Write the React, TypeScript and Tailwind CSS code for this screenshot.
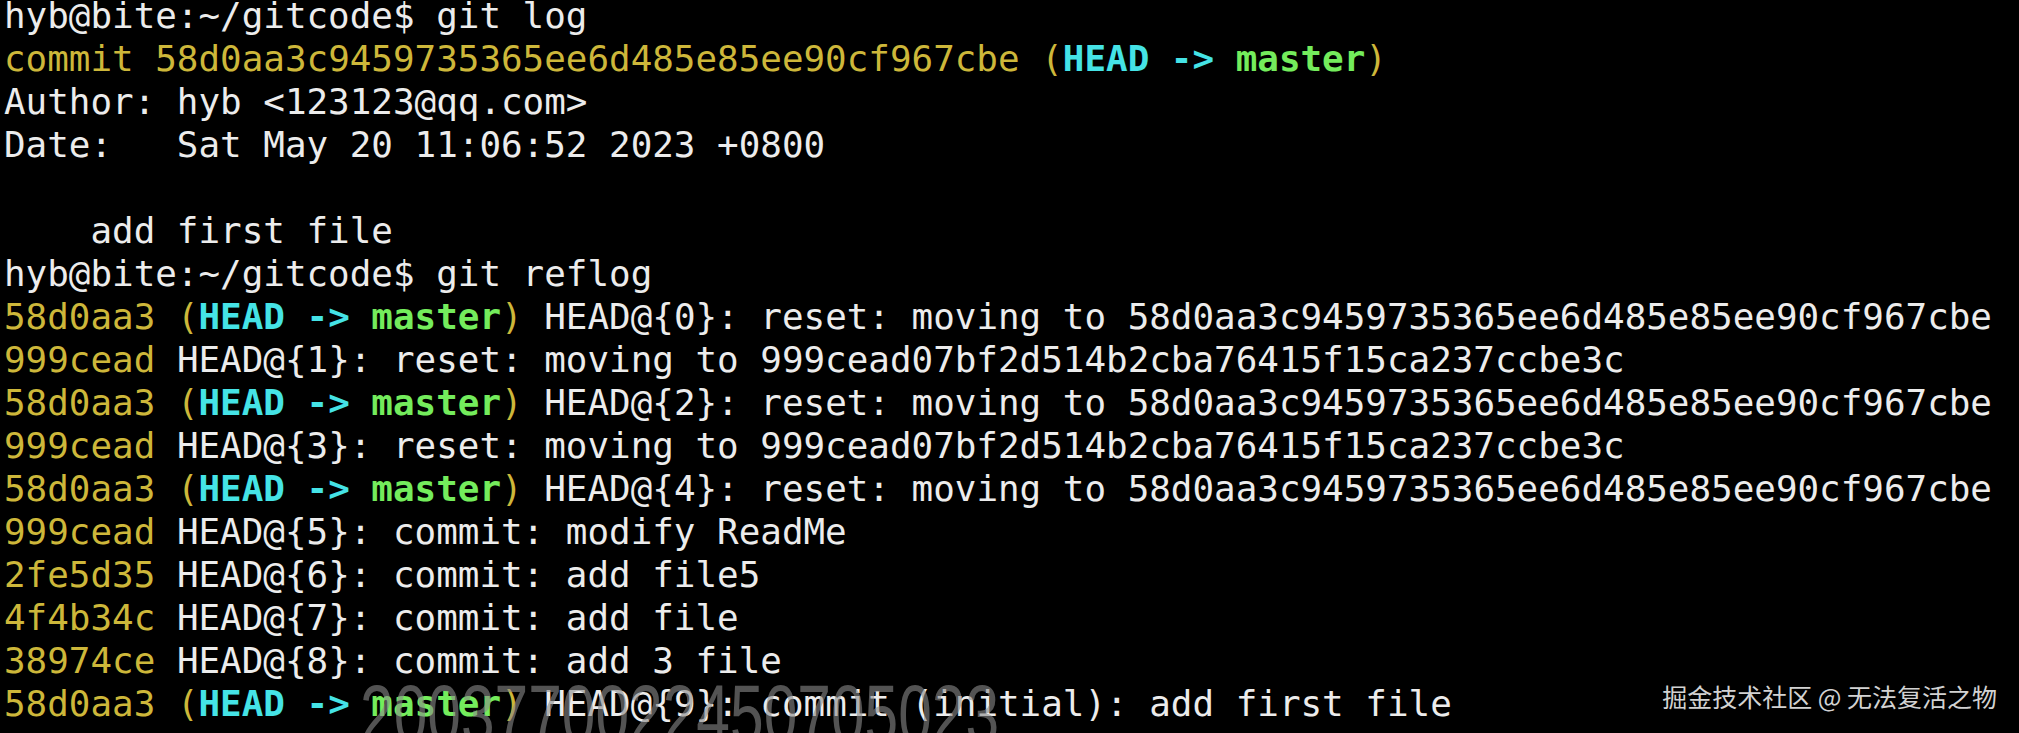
import React from "react";

const Y = ({ children }: { children: React.ReactNode }) => (
  <span className="text-[#cdb73a]">{children}</span>
);
const Head = () => (
  <>
    <Y>(</Y>
    <span className="font-bold text-[#45e3e6]">HEAD -&gt; </span>
    <span className="font-bold text-[#74ec5c]">master</span>
    <Y>)</Y>
  </>
);

const FULL = "58d0aa3c9459735365ee6d485e85ee90cf967cbe";
const OTHER = "999cead07bf2d514b2cba76415f15ca237ccbe3c";

export default function App() {
  const reflog: [string, boolean, string][] = [
    ["58d0aa3", true, `HEAD@{0}: reset: moving to ${FULL}`],
    ["999cead", false, `HEAD@{1}: reset: moving to ${OTHER}`],
    ["58d0aa3", true, `HEAD@{2}: reset: moving to ${FULL}`],
    ["999cead", false, `HEAD@{3}: reset: moving to ${OTHER}`],
    ["58d0aa3", true, `HEAD@{4}: reset: moving to ${FULL}`],
    ["999cead", false, "HEAD@{5}: commit: modify ReadMe"],
    ["2fe5d35", false, "HEAD@{6}: commit: add file5"],
    ["4f4b34c", false, "HEAD@{7}: commit: add file"],
    ["38974ce", false, "HEAD@{8}: commit: add 3 file"],
    ["58d0aa3", true, "HEAD@{9}: commit (initial): add first file"],
  ];
  return (
    <div className="relative w-[2019px] h-[733px] overflow-hidden bg-black">
      <div className="-mt-[6px] pl-[4px] whitespace-pre text-[#ececec] font-['DejaVu_Sans_Mono',monospace] text-[35.9px] leading-[43px]">
        <div>hyb@bite:~/gitcode$ git log</div>
        <div>
          <Y>commit {FULL} </Y>
          <Head />
        </div>
        <div>Author: hyb &lt;123123@qq.com&gt;</div>
        <div>Date:   Sat May 20 11:06:52 2023 +0800</div>
        <div>{" "}</div>
        <div>    add first file</div>
        <div>hyb@bite:~/gitcode$ git reflog</div>
        {reflog.map(([h, head, rest], i) => (
          <div key={i}>
            <Y>{h}</Y> {head ? (
              <>
                <Head />{" "}
              </>
            ) : null}
            {rest}
          </div>
        ))}
      </div>
      <div className="absolute left-[360px] top-[672px] origin-left scale-x-[0.72] whitespace-nowrap font-['Liberation_Sans',sans-serif] text-[84px] leading-none text-[#8a8a8a]/60">
        2003770022450705023
      </div>
      <div className="absolute right-[22px] top-[680px] whitespace-nowrap font-['Noto_Sans_CJK_SC',sans-serif] text-[25px] leading-[32px] text-[#d2d2d2]">
        掘金技术社区 @ 无法复活之物
      </div>
    </div>
  );
}
